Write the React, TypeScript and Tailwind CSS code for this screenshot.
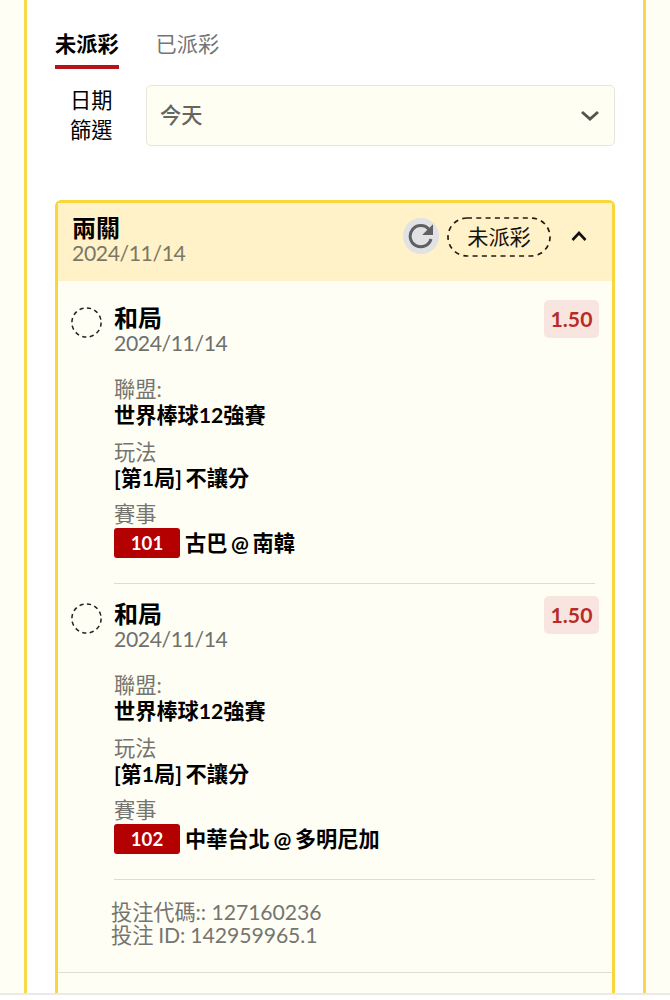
import { ReactNode } from 'react';

type Leg = {
  id: number;
  pick: string;
  date: string;
  odds: string;
  league: string;
  market: string;
  teams: string;
};

const LEGS: Leg[] = [
  {
    id: 101,
    pick: '和局',
    date: '2024/11/14',
    odds: '1.50',
    league: '世界棒球12強賽',
    market: '[第1局] 不讓分',
    teams: '古巴 @ 南韓',
  },
  {
    id: 102,
    pick: '和局',
    date: '2024/11/14',
    odds: '1.50',
    league: '世界棒球12強賽',
    market: '[第1局] 不讓分',
    teams: '中華台北 @ 多明尼加',
  },
];

function Tabs() {
  return (
    <div className="flex h-[69px] items-end gap-[37px] pl-7">
      <button className="h-[39px] border-b-[4px] border-[#b5121b] pb-[7px] leading-[28px] font-bold text-black">
        未派彩
      </button>
      <button className="h-[39px] pb-[11px] leading-[28px] text-[#757575]">已派彩</button>
    </div>
  );
}

function DateFilter() {
  return (
    <div className="mt-4 flex h-[61px] pr-[28px] pl-7">
      <label className="w-[91px] pl-[15px] leading-[30px] text-black">
        日期
        <br />
        篩選
      </label>
      <div className="flex flex-1 items-center justify-between rounded-[5px] border-[1.5px] border-[#e6e6dd] bg-[#fffef3] pr-[14px] pl-[13px]">
        <span className="font-medium text-[#66655f]">今天</span>
        <svg width="20" height="14" viewBox="0 0 20 14" fill="none">
          <path d="M2 3L10 10L18 3" stroke="#55554f" strokeWidth="2.9" />
        </svg>
      </div>
    </div>
  );
}

function RefreshButton() {
  return (
    <button className="flex h-9 w-9 items-center justify-center rounded-full bg-[#e2e1e3]" aria-label="重新整理">
      <svg width="26" height="26" viewBox="0 0 26 26" fill="none">
        <path d="M21 6.5A10.6 10.6 0 1 0 23 16" stroke="#5f6063" strokeWidth="3" />
        <path d="M25 1.2V12H14.2Z" fill="#5f6063" />
      </svg>
    </button>
  );
}

function Field({ label, children }: { label: string; children: ReactNode }) {
  return (
    <div className="mb-[10.5px] leading-[26px]">
      <p className="text-[#757570]">{label}</p>
      <div className="font-bold text-black [word-spacing:-1.5px]">{children}</div>
    </div>
  );
}

function LegRow({ leg }: { leg: Leg }) {
  return (
    <div className="flex h-[296px] pr-[17px] pl-[13px]">
      <svg width="31" height="31" viewBox="0 0 31 31" fill="none" className="mt-[19px] shrink-0">
        <circle cx="15.5" cy="15.5" r="14.6" stroke="#222" strokeWidth="1.5" strokeDasharray="4.2 3.445" />
      </svg>
      <div className="ml-3 flex-1 border-b border-[#dcdcd4] pt-[17px]">
        <div className="flex justify-between">
          <div className="leading-[25px]">
            <p className="text-[24px] font-bold text-black">{leg.pick}</p>
            <p className="mt-px tracking-[-0.4px] text-[#70706b]">{leg.date}</p>
          </div>
          <span className="-mt-[5px] -mr-1 flex h-[38px] w-[55px] items-center justify-center rounded-[5px] bg-[#f8e5df] pt-px text-[21.2px] font-bold text-[#b82c26]">
            {leg.odds}
          </span>
        </div>
        <div className="mt-5">
          <Field label="聯盟:">{leg.league}</Field>
          <Field label="玩法">{leg.market}</Field>
          <Field label="賽事">
            <div className="mt-px flex items-center">
              <span className="mr-[5px] h-[30px] w-[66px] rounded-[3px] bg-[#b40000] text-center text-[18.6px] leading-[30px] text-white">
                {leg.id}
              </span>
              {leg.teams}
            </div>
          </Field>
        </div>
      </div>
    </div>
  );
}

function BetCard() {
  return (
    <section className="mt-[54px] mr-[28px] ml-7 flex-1 rounded-t-[6px] border-[3px] border-b-0 border-[#f9d63c] bg-[#fffef5]">
      <header className="flex h-[78px] justify-between bg-[#fff1c8] pt-[13px] pl-[14px]">
        <div className="leading-[25px]">
          <h2 className="-mt-px text-[24px] font-bold text-black">兩關</h2>
          <p className="mt-px tracking-[-0.4px] text-[#7c7765]">2024/11/14</p>
        </div>
        <div className="flex h-10 items-center pr-[25px]">
          <RefreshButton />
          <div className="mt-0.5 ml-2 grid h-10 w-[104px] place-items-center">
            <svg width="104" height="40" viewBox="0 0 104 40" fill="none" className="col-start-1 row-start-1">
              <rect x="1" y="1" width="102" height="38" rx="19" stroke="#211c10" strokeWidth="1.7" strokeDasharray="5 4.3" />
            </svg>
            <span className="col-start-1 row-start-1 pt-0.5 text-[#16130c]">未派彩</span>
          </div>
          <svg width="16" height="12" viewBox="0 0 16 12" fill="none" className="ml-5">
            <path d="M1.5 10L8 3L14.5 10" stroke="#111" strokeWidth="2.6" />
          </svg>
        </div>
      </header>
      <div className="pt-[7px]">
        {LEGS.map((leg) => (
          <LegRow key={leg.id} leg={leg} />
        ))}
      </div>
      <footer className="h-[93px] border-b border-[#dfdfd8] pt-[21px] pl-[53px] leading-[23px] text-[#757570]">
        <p className="tracking-[-0.05px]">投注代碼:: 127160236</p>
        <p className="tracking-[-0.05px] [word-spacing:-0.5px]">投注 ID: 142959965.1</p>
      </footer>
    </section>
  );
}

export default function App() {
  return (
    <div className="h-[1000px] w-[670px] overflow-hidden bg-white font-['Lato','Noto_Sans_CJK_TC',sans-serif] text-[21.2px]">
      <div className="h-[995px] overflow-hidden border-b-2 border-[#e9e9e9] bg-[#fffef5] px-6">
        <main className="flex h-full flex-col border-x-[3px] border-[#f9d94c] bg-white">
          <Tabs />
          <DateFilter />
          <BetCard />
        </main>
      </div>
    </div>
  );
}
